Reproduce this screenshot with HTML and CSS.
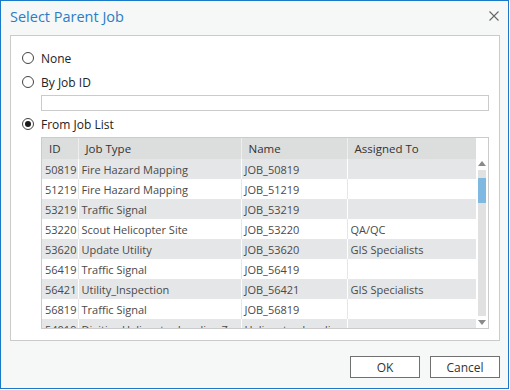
FILE: index.html
```html
<!DOCTYPE html>
<html>
<head>
<meta charset="utf-8">
<link rel="stylesheet" href="styles.css">
</head>
<body>
<div class="dialog">
  <div class="titlebar">
    <span class="title">Select Parent Job</span>
    <svg class="close" width="10" height="10" viewBox="0 0 10 10"><path d="M0.5 0.5 L9.5 9.5 M9.5 0.5 L0.5 9.5" stroke="#666" stroke-width="1.1" fill="none"/></svg>
  </div>
  <div class="panel">
    <div class="radio-row"><span class="radio"></span><span>None</span></div>
    <div class="radio-row"><span class="radio"></span><span>By Job ID</span></div>
    <div class="input"></div>
    <div class="radio-row"><span class="radio checked"></span><span>From Job List</span></div>
    <div class="grid">
      <div class="table-wrap">
        <table>
          <colgroup><col class="c-id"><col class="c-type"><col class="c-name"><col class="c-asg"></colgroup>
          <thead>
            <tr><th>ID</th><th>Job Type</th><th>Name</th><th>Assigned To</th></tr>
          </thead>
          <tbody>
            <tr class="alt"><td>50819</td><td>Fire Hazard Mapping</td><td>JOB_50819</td><td></td></tr>
            <tr><td>51219</td><td>Fire Hazard Mapping</td><td>JOB_51219</td><td></td></tr>
            <tr class="alt"><td>53219</td><td>Traffic Signal</td><td>JOB_53219</td><td></td></tr>
            <tr><td>53220</td><td>Scout Helicopter Site</td><td>JOB_53220</td><td>QA/QC</td></tr>
            <tr class="alt"><td>53620</td><td>Update Utility</td><td>JOB_53620</td><td>GIS Specialists</td></tr>
            <tr><td>56419</td><td>Traffic Signal</td><td>JOB_56419</td><td></td></tr>
            <tr class="alt"><td>56421</td><td>Utility_Inspection</td><td>JOB_56421</td><td>GIS Specialists</td></tr>
            <tr><td>56819</td><td>Traffic Signal</td><td>JOB_56819</td><td></td></tr>
            <tr class="alt"><td>54019</td><td>Digitize Helicopter Landing Zone</td><td>Helicopter_Landing_7</td><td></td></tr>
          </tbody>
        </table>
      </div>
      <div class="scrollbar">
        <div class="sb-head"></div>
        <div class="arrow up"></div>
        <div class="track">
          <div class="thumb"></div>
        </div>
        <div class="arrow down"></div>
      </div>
    </div>
  </div>
  <div class="footer">
    <button class="btn">OK</button>
    <button class="btn">Cancel</button>
  </div>
</div>
</body>
</html>
```

FILE: styles.css
```css
* { box-sizing: border-box; }
html, body { margin: 0; padding: 0; background: #fff; }
body { font-family: "Open Sans", "Noto Sans", sans-serif; font-size: 11.5px; color: #333; }

.dialog {
  width: 509px;
  height: 389px;
  border: 1px solid #1a79c9;
  background: #f6f7f7;
  display: flex;
  flex-direction: column;
}

.titlebar {
  height: 34px;
  display: flex;
  align-items: center;
  justify-content: space-between;
  padding: 0 9px 4px 9px;
}
.title { color: #2a7dc6; font-size: 14.5px; }

.panel {
  margin-left: 9px;
  width: 490px;
  height: 306px;
  background: #fff;
  border: 1px solid #cbcbcb;
  padding: 11px 0 0 11px;
  display: flex;
  flex-direction: column;
  gap: 2px;
}

.radio-row {
  height: 22px;
  display: flex;
  align-items: center;
  gap: 7px;
  color: #222;
  font-size: 12px;
}
.radio {
  width: 12px; height: 12px;
  border: 1px solid #444;
  border-radius: 50%;
  background: #fff;
  display: flex; align-items: center; justify-content: center;
}
.radio.checked::after {
  content: "";
  width: 6px; height: 6px; border-radius: 50%;
  background: #1a1a1a;
}

.input {
  margin-left: 19px;
  width: 448px;
  height: 16px;
  border: 1px solid #cbcbcb;
  background: #fff;
}

.grid {
  margin-left: 19px;
  width: 448px;
  height: 192px;
  border: 1px solid #cbcbcb;
  display: flex;
  overflow: hidden;
}
.table-wrap { width: 434px; height: 190px; overflow: hidden; }
table { border-collapse: collapse; table-layout: fixed; width: 434px; }
.c-id { width: 36px; }
.c-type { width: 163px; }
.c-name { width: 106px; }
.c-asg { width: 129px; }
th {
  height: 21px;
  background: #dcdddd;
  font-weight: normal;
  text-align: left;
  padding: 0 0 0 7px;
  color: #333;
  border-right: 1px solid #eeeeee;
  white-space: nowrap;
}
td {
  height: 20px;
  padding: 0 0 0 3px;
  font-size: 11px;
  color: #4a4a4a;
  white-space: nowrap;
  overflow: hidden;
  border-right: 1px solid #e5e6e7;
  background: #fff;
}
tr.alt td { background: #e5e6e7; border-right-color: #fff; }

.scrollbar {
  width: 12px;
  height: 190px;
  background: #fff;
  display: flex;
  flex-direction: column;
  align-items: center;
}
.sb-head { height: 23px; }
.arrow { width: 0; height: 0; border-left: 4px solid transparent; border-right: 4px solid transparent; }
.arrow.up { border-bottom: 5px solid #8a8a8a; margin-bottom: 4px; }
.arrow.down { border-top: 5px solid #8a8a8a; margin-top: 4px; }
.track {
  width: 8px;
  height: 146px;
  background: #e1e1e1;
  padding-top: 8px;
}
.thumb { width: 8px; height: 25px; background: #7fb9e2; }

.footer {
  display: flex;
  justify-content: flex-end;
  gap: 10px;
  padding: 15px 8px 0 0;
}
.btn {
  width: 70px;
  height: 22px;
  border: 1px solid #707070;
  background: #fff;
  font-family: "Open Sans", "Noto Sans", sans-serif;
  font-size: 12px;
  color: #333;
  padding: 0;
}
```
